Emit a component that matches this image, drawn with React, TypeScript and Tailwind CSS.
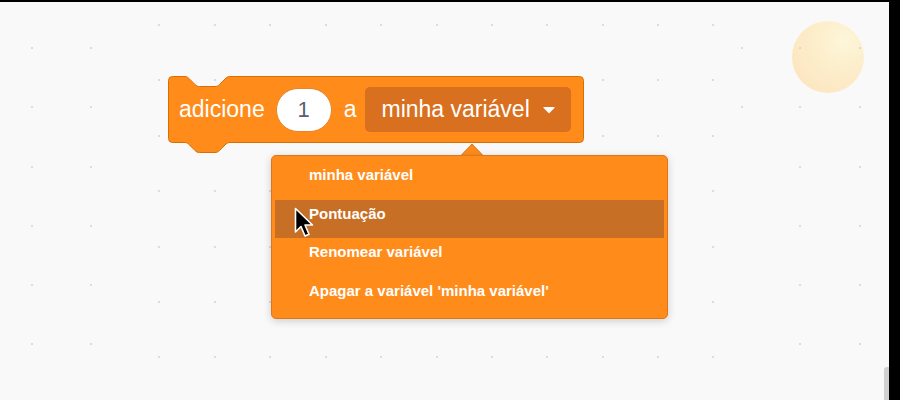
import React from 'react';

// dot grid of the workspace (page coords), three bands as in the capture
const leftXs = [32, 91];
const outerYs = [48, 107, 167, 226, 285, 344];
const midXs = [159, 215, 270, 326, 381, 437, 492, 547, 603, 658, 713];
const midYs = [25, 80, 136, 191, 247, 302, 357];

function buildDots() {
  const dots: { x: number; y: number }[] = [];
  for (const y of outerYs) {
    for (const x of leftXs) dots.push({ x, y });
    for (const x of [800, 860]) dots.push({ x, y });
    if (y < 150) dots.push({ x: 742, y });
  }
  for (const y of midYs) for (const x of midXs) dots.push({ x, y });
  return dots;
}

const menuItems = ['minha variável', 'Pontuação', 'Renomear variável', "Apagar a variável 'minha variável'"];

export default function App() {
  const dots = buildDots();

  return (
    <div className="relative w-[900px] h-[400px] overflow-hidden bg-[#f9f9f9] border-t-2 border-r-[11px] border-black font-['Liberation_Sans',Arial,sans-serif]">
      {/* sun sprite */}
      <div className="absolute left-[792px] top-[19px] w-[72px] h-[72px] rounded-full opacity-90 bg-[radial-gradient(circle_at_72%_28%,#fdf6d6_0%,#fdebc4_45%,#fde0b6_100%)]" />

      {dots.map((d, i) => (
        <div
          key={i}
          className="absolute w-[2px] h-[2px] rounded-full bg-[#d2d2d2]"
          style={{ left: d.x - 1, top: d.y - 3 }}
        />
      ))}

      {/* change variable block */}
      <div className="absolute left-[168px] top-[74px] w-[416px]">
        <svg className="absolute left-0 top-0" width="416" height="78" viewBox="0 0 416 78">
          <path
            d="M0.5,4.5 Q0.5,0.5 4.5,0.5 H17 C19,0.5 20,1.5 21.5,3 L27,8.5 C28.5,10 29.5,10.5 31.5,10.5 H47 C49,10.5 50,10 51.5,8.5 L57,3 C58.5,1.5 59.5,0.5 62,0.5 H411.5 Q415.5,0.5 415.5,4.5 V62.5 Q415.5,66.5 411.5,66.5 H62 C59.5,66.5 58.5,67.5 57,69 L51.5,74.5 C50,76 49,76.5 47,76.5 H31.5 C29.5,76.5 28.5,76 27,74.5 L21.5,69 C20,67.5 19,66.5 17,66.5 H4.5 Q0.5,66.5 0.5,62.5 Z"
            fill="#ff8c1a"
            stroke="#db6e00"
            strokeWidth={1}
          />
        </svg>
        <div className="relative flex items-center h-[67px] pl-[11px] text-[23px] text-white">
          <span>adicione</span>
          <div className="ml-[11px] w-[56px] h-[44px] rounded-full bg-white border border-[#e5862c] flex items-center justify-center text-[22px] text-[#575e75]">
            1
          </div>
          <span className="ml-[12px]">a</span>
          <div className="ml-[9px] w-[206px] h-[45px] rounded-[5px] bg-[#d9701f] flex items-center pl-[16px]">
            <span>minha variável</span>
            <svg className="ml-[13px]" width="12" height="8" viewBox="0 0 12 8">
              <path d="M1,1.5 H11 L6,6.5 Z" fill="#ffffff" stroke="#ffffff" strokeWidth={1.2} strokeLinejoin="round" />
            </svg>
          </div>
        </div>
      </div>

      {/* dropdown menu */}
      <div className="absolute left-[271px] top-[153px] w-[397px] h-[164px]">
        <svg className="absolute left-[188px] top-[-12px]" width="26" height="14" viewBox="0 0 26 14">
          <path d="M1,13.5 L13,1 L25,13.5" fill="#ff8c1a" stroke="#e0761a" strokeWidth={1} />
        </svg>
        <div className="relative h-full rounded-[5px] bg-[#ff8c1a] border border-[#e0761a] shadow-[0_2px_8px_rgba(0,0,0,0.18)] pt-[5px] flex flex-col">
          {menuItems.map((item, i) => (
            <div
              key={item}
              className={
                'mx-[3px] h-[38.5px] pl-[34px] pt-[6px] text-[15px] leading-[15px] font-bold text-white ' +
                (i === 1 ? 'bg-[#c86f26]' : '')
              }
            >
              {item}
            </div>
          ))}
        </div>
      </div>

      {/* mouse pointer */}
      <svg className="absolute left-[293px] top-[204px]" width="24" height="36" viewBox="0 0 24 36">
        <path
          d="M2.5,2.5 L2.5,26 L8,20.5 L12,30 L16,28.3 L12,19 L19.5,19 Z"
          fill="#000000"
          stroke="#ffffff"
          strokeWidth={1.6}
          strokeLinejoin="round"
        />
      </svg>

      {/* scrollbar thumb */}
      <div className="absolute right-0 bottom-0 w-[5px] h-[33px] rounded-tl-[3px] bg-[#d0d0d0]" />
    </div>
  );
}
